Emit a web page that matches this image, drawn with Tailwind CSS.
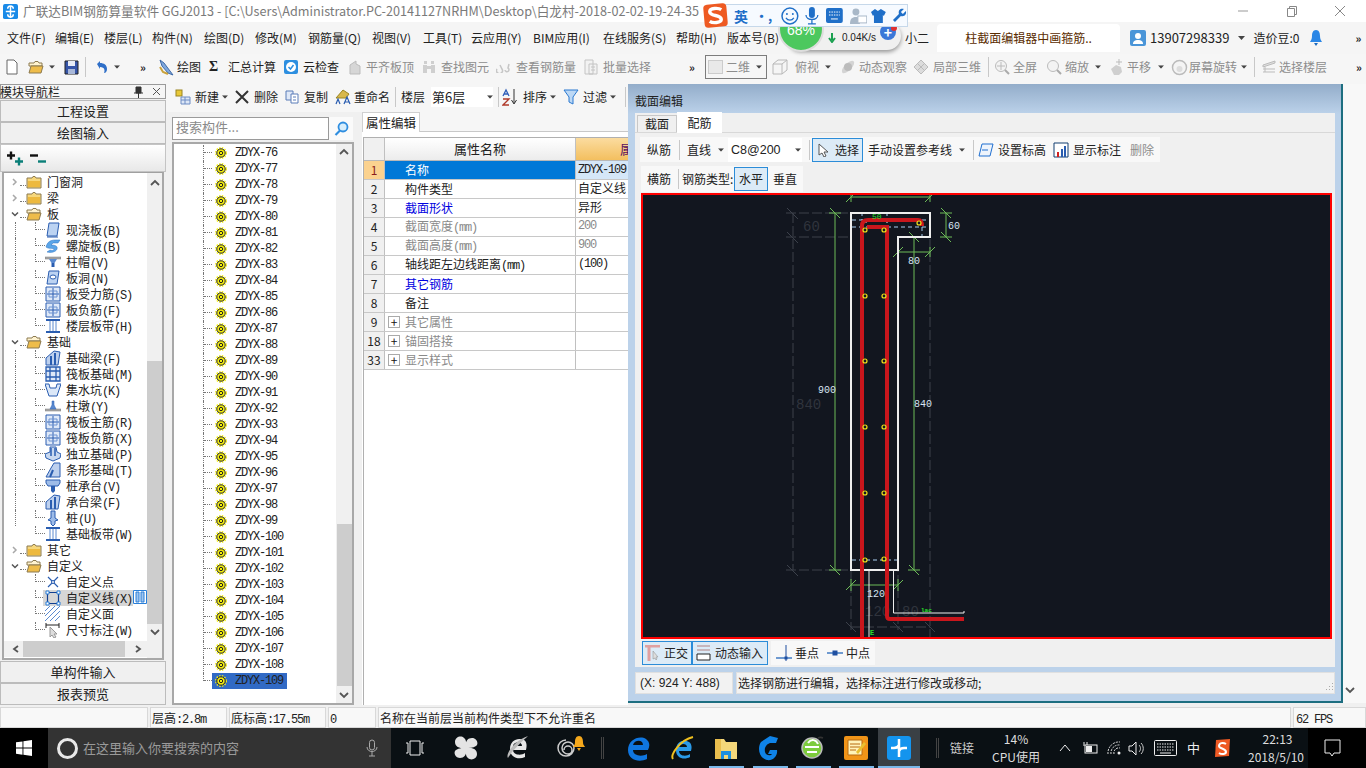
<!DOCTYPE html>
<html lang="zh">
<head>
<meta charset="utf-8">
<script src="https://cdn.jsdelivr.net/npm/@tailwindcss/browser@4"></script>
<title>广联达BIM钢筋算量软件</title>
</head>
<body class="m-0 bg-[#f0f0f0]">
<svg class="hidden">
  <symbol id="folder" viewBox="0 0 16 14"><path d="M1 3h5l1-1.500h2l1 1.500h5v10H1z" fill="#f6d77c" stroke="#8c7a50"/><path d="M2 6h12v6H2z" fill="#edb93e"/></symbol>
  <symbol id="folderopen" viewBox="0 0 16 14"><path d="M1 3h5l1-1.500h3l1 1.500h3v3H1z" fill="#fff3cf" stroke="#8c7a50"/><path d="M1 13l2-7h12l-2 7z" fill="#eebc4a" stroke="#8c7a50"/></symbol>
  <symbol id="coin" viewBox="0 0 12 12"><circle cx="6" cy="6" r="5.300" fill="none" stroke="#f4ee10" stroke-width="1.400" stroke-dasharray="1.500 1.300"/><circle cx="6" cy="6" r="4.200" fill="#f4ee10" stroke="#222" stroke-width="1"/><circle cx="6" cy="6" r="1.700" fill="#f4ee10" stroke="#222"/></symbol>
  <symbol id="chev" viewBox="0 0 8 8"><path d="M2 1l3 3-3 3" fill="none" stroke="#a8a8a8" stroke-width="1.500"/></symbol>
  <symbol id="chevd" viewBox="0 0 8 8"><path d="M1 2.500l3 3 3-3" fill="none" stroke="#555" stroke-width="1.500"/></symbol>
  <symbol id="sup" viewBox="0 0 10 8"><path d="M1 6l4-4 4 4" fill="none" stroke="#555" stroke-width="1.800"/></symbol>
  <symbol id="sdn" viewBox="0 0 10 8"><path d="M1 2l4 4 4-4" fill="none" stroke="#555" stroke-width="1.800"/></symbol>
  <symbol id="grid" viewBox="0 0 16 16"><path d="M1 1h14v14H1z" fill="#dfe9f8" stroke="#2a5db0"/><path d="M8 2v12M2 8h12" stroke="#2a5db0"/><path d="M4 5h8v6H4z" fill="none" stroke="#6c93d2"/></symbol>
  <symbol id="band" viewBox="0 0 16 16"><path d="M1 2h14M1 14h14" stroke="#2a5db0" stroke-width="2"/><path d="M5 3v10M8 3v10M11 3v10" stroke="#5b8ad0"/></symbol>
  <symbol id="beam" viewBox="0 0 16 16"><path d="M1 15V8L9 1l6 1-2 13z" fill="#bdd0ee" stroke="#2a5db0"/><path d="M6 15V6M10 15V3" stroke="#2a5db0" stroke-width="2"/></symbol>
  <symbol id="dd" viewBox="0 0 7 4"><path d="M0 0h7L3.500 4z" fill="#444"/></symbol>
</svg>

<div class="relative flex h-[768px] w-[1366px] flex-col overflow-hidden font-['Noto_Sans_CJK_SC','Liberation_Sans',sans-serif] text-[12px] leading-4 text-[#222] [&_b]:font-['Liberation_Mono',monospace] [&_b]:font-normal [&_b]:tracking-[-1.200px]">

  <!-- title bar -->
  <header class="flex h-[22px] items-center bg-white pl-[3px]">
    <svg class="h-[15px] w-[15px]" viewBox="0 0 16 16"><rect width="16" height="16" rx="2" fill="#1a8be8"/><path d="M8 2v12M3 8h10M5 5a3 3 0 0 1 6 0M5 11a3 3 0 0 0 6 0" fill="none" stroke="#fff" stroke-width="1.600"/></svg>
    <span class="ml-[5px] whitespace-nowrap text-[12.650px] text-[#7a7a7a]">广联达BIM钢筋算量软件 GGJ2013 - [C:\Users\Administrator.PC-20141127NRHM\Desktop\白龙村-2018-02-02-19-24-35</span>
    <div class="ml-auto flex items-center">
      <svg class="mr-[37px] h-3 w-3" viewBox="0 0 12 12"><path d="M1 6h10" stroke="#999"/></svg>
      <svg class="mr-[36px] h-3 w-3" viewBox="0 0 12 12"><path d="M1.500 3.500h7v8h-7zM3.500 3.500v-2h7v8h-2" fill="none" stroke="#888"/></svg>
      <svg class="mr-[20px] h-3 w-3" viewBox="0 0 12 12"><path d="M1 1l10 10M11 1L1 11" stroke="#888"/></svg>
    </div>
  </header>

  <!-- menu bar -->
  <nav class="flex h-[32px] items-center bg-[#f5f5f5] pl-[7px] whitespace-nowrap">
    <span class="w-[48px]">文件(F)</span><span class="w-[49px]">编辑(E)</span><span class="w-[48px]">楼层(L)</span><span class="w-[52px]">构件(N)</span><span class="w-[51px]">绘图(D)</span><span class="w-[53px]">修改(M)</span><span class="w-[64px]">钢筋量(Q)</span><span class="w-[51px]">视图(V)</span><span class="w-[48px]">工具(T)</span><span class="w-[62px]">云应用(Y)</span><span class="w-[70px]">BIM应用(I)</span><span class="w-[73px]">在线服务(S)</span><span class="w-[51px]">帮助(H)</span><span class="w-[178px]">版本号(B)</span><span class="w-[32px]">小二</span>
    <span class="flex h-[28px] w-[183px] items-center justify-center rounded-t-[4px] bg-white text-[#5a2c00]">柱截面编辑器中画箍筋..</span>
    <span class="ml-[10px] flex items-center"><svg class="h-[16px] w-[16px]" viewBox="0 0 16 16"><rect width="16" height="16" rx="2" fill="#4a95d8"/><circle cx="8" cy="6" r="3" fill="#fff"/><path d="M3 14c0-3 2-4 5-4s5 1 5 4z" fill="#fff"/></svg><span class="ml-[4px] text-[13px]">13907298339</span></span>
    <svg class="ml-[9px] h-1 w-[7px]" viewBox="0 0 7 4"><use href="#dd"/></svg>
    <span class="ml-[8px]">造价豆:0</span>
    <svg class="ml-[10px] h-[18px] w-[14px]" viewBox="0 0 14 18"><path d="M7 1c3 0 4 3 4 6s1 4 2 6H1c1-2 2-3 2-6s1-6 4-6z" fill="#2a86e6"/><path d="M5 14h4l-2 3z" fill="#1a6ac0"/></svg>
    <span class="ml-[32px] text-[11px] font-bold leading-3">»</span>
  </nav>

  <!-- main toolbar -->
  <div class="flex h-[30px] items-center whitespace-nowrap bg-[#f6f6f6] pb-[4px] pl-[6px] text-[#222] [&>svg]:shrink-0">
    <svg class="h-4 w-3" viewBox="0 0 12 16"><path d="M1 1h7l3 3v11H1z" fill="#fff" stroke="#666"/></svg>
    <svg class="ml-[10px] h-[14px] w-[16px]" viewBox="0 0 16 14"><use href="#folderopen"/></svg>
    <svg class="ml-[5px] h-1 w-[6px]" viewBox="0 0 7 4"><use href="#dd"/></svg>
    <svg class="ml-[9px] h-[15px] w-[15px]" viewBox="0 0 15 15"><path d="M1 1h13v13H1z" fill="#3655a8" stroke="#222"/><path d="M4 1h7v5H4z" fill="#e8ecf6"/><path d="M4 9h7v5H4z" fill="#a9b8d8"/></svg>
    <i class="ml-[6px] mr-[8px] h-5 border-l border-[#c8c8c8]"></i>
    <svg class="h-[14px] w-[14px]" viewBox="0 0 14 14"><path d="M3 4l3-3v2c4 0 7 2 7 6 0 2-1 4-3 4 1-2 1-6-4-6v2z" fill="#2f6fc8"/></svg>
    <svg class="ml-[6px] h-1 w-[6px]" viewBox="0 0 7 4"><use href="#dd"/></svg>
    <span class="ml-[20px] w-[10px] text-[11px] font-bold leading-3">»</span>
    <svg class="ml-[7px] h-[18px] w-[18px]" viewBox="0 0 18 18"><path d="M3 2l4 3 6 8 3 4-5-2-6-7z" fill="#7fa8dc" stroke="#3f6aa8"/><path d="M3 9l3 5 5 2" fill="none" stroke="#c9a23c" stroke-width="2"/></svg>
    <span class="ml-[2px] w-[31px]">绘图</span>
    <span class="w-[20px] pl-[1px] text-[14px] font-bold font-['Liberation_Serif',serif]">Σ</span>
    <span class="w-[48px]">汇总计算</span>
    <svg class="ml-[7px] h-4 w-4" viewBox="0 0 16 16"><rect x="1" y="1" width="14" height="14" rx="2" fill="#2d8fe0"/><circle cx="8" cy="8" r="5" fill="#fff"/><path d="M5.500 8l2 2 3-4" fill="none" stroke="#2d8fe0" stroke-width="1.500"/></svg>
    <span class="ml-[4px] w-[36px]">云检查</span>
    <svg class="ml-[8px] h-[16px] w-[16px]" viewBox="0 0 16 16"><path d="M3 15V6l6-4v3l4 2v8z" fill="#d6d6d6" stroke="#bbb"/></svg>
    <span class="ml-[3px] w-[48px] text-[#8d8d8d]">平齐板顶</span>
    <svg class="ml-[7px] h-[14px] w-[16px]" viewBox="0 0 16 14"><path d="M2 5h4v8H2zM10 5h4v8h-4zM3 1h3v3H3zM10 1h3v3h-3zM6 6h4v3H6z" fill="#cfcfcf"/></svg>
    <span class="ml-[4px] w-[48px] text-[#8d8d8d]">查找图元</span>
    <svg class="ml-[7px] h-3 w-[14px]" viewBox="0 0 14 12"><path d="M1 8a3 3 0 1 0 5 0l-2-4M9 9a2 2 0 1 0 3-2l1-4" fill="none" stroke="#c6c6c6" stroke-width="1.500"/></svg>
    <span class="ml-[6px] w-[60px] text-[#8d8d8d]">查看钢筋量</span>
    <svg class="ml-[7px] h-4 w-4" viewBox="0 0 16 16"><path d="M2 1h8v14H2zM6 5h8v10H6z" fill="#f2f2f2" stroke="#c4c4c4"/><path d="M8 8h4M8 11h4" stroke="#c4c4c4"/></svg>
    <span class="ml-[4px] w-[48px] text-[#8d8d8d]">批量选择</span>
    <span class="ml-[38px] w-[8px] text-[11px] font-bold leading-3">»</span>
    <div class="ml-[8px] flex h-[24px] w-[62px] shrink-0 items-center border border-[#7c7c7c] pl-[2px] text-[#8d8d8d]">
      <i class="h-[14px] w-[15px] border border-[#ccc] bg-[#e9e9e9]"></i><span class="ml-[3px]">二维</span><svg class="ml-[6px] h-1 w-[6px]" viewBox="0 0 7 4"><use href="#dd"/></svg>
    </div>
    <svg class="ml-[4px] h-[18px] w-[18px]" viewBox="0 0 18 18"><path d="M2 6l5-4h9v10l-5 4H2zM2 6h9v10M11 6l5-4" fill="#f5f5f5" stroke="#b8b8b8"/></svg>
    <span class="ml-[6px] w-[24px] text-[#8d8d8d]">俯视</span><svg class="ml-[6px] h-1 w-[6px]" viewBox="0 0 7 4"><use href="#dd"/></svg>
    <svg class="ml-[8px] h-[18px] w-[18px]" viewBox="0 0 18 18"><ellipse cx="9" cy="9" rx="8" ry="3.500" transform="rotate(-45 9 9)" fill="#d4d4d4"/><circle cx="9" cy="9" r="4" fill="#bcbcbc"/></svg>
    <span class="ml-[2px] w-[48px] text-[#8d8d8d]">动态观察</span>
    <svg class="ml-[6px] h-[16px] w-[16px]" viewBox="0 0 16 16"><path d="M8 1l7 7-7 7-7-7z" fill="#dcdcdc" stroke="#bbb"/><path d="M4 4l8 8M12 4l-8 8" stroke="#bbb"/></svg>
    <span class="ml-[4px] w-[48px] text-[#8d8d8d]">局部三维</span>
    <i class="ml-[7px] h-5 border-l border-[#c8c8c8]"></i>
    <svg class="ml-[5px] h-[16px] w-[16px]" viewBox="0 0 16 16"><circle cx="7" cy="7" r="5.500" fill="#f3f3f3" stroke="#bbb"/><path d="M3 7h8M7 3v8" stroke="#bbb"/><path d="M11 11l4 4" stroke="#aaa" stroke-width="2"/></svg>
    <span class="ml-[3px] w-[24px] text-[#8d8d8d]">全屏</span>
    <svg class="ml-[9px] h-[16px] w-[16px]" viewBox="0 0 16 16"><circle cx="7" cy="7" r="5.500" fill="#f3f3f3" stroke="#bbb"/><path d="M11 11l4 4" stroke="#aaa" stroke-width="2"/></svg>
    <span class="ml-[3px] w-[24px] text-[#8d8d8d]">缩放</span><svg class="ml-[6px] h-1 w-[6px]" viewBox="0 0 7 4"><use href="#dd"/></svg>
    <svg class="ml-[8px] h-[18px] w-[16px]" viewBox="0 0 16 18"><path d="M5 17l-3-6 5-4 5 2 1 5-3 3z" fill="#cfcfcf"/><path d="M10 1v6M7 4h6" stroke="#bbb"/></svg>
    <span class="ml-[2px] w-[24px] text-[#8d8d8d]">平移</span><svg class="ml-[7px] h-1 w-[6px]" viewBox="0 0 7 4"><use href="#dd"/></svg>
    <svg class="ml-[7px] h-[17px] w-[17px]" viewBox="0 0 17 17"><circle cx="8.500" cy="8.500" r="7" fill="#f4f4f4" stroke="#bbb" stroke-width="1.500"/><circle cx="8.500" cy="10" r="3" fill="#ddd"/></svg>
    <span class="ml-[1px] w-[48px] text-[#8d8d8d]">屏幕旋转</span><svg class="ml-[4px] h-1 w-[6px]" viewBox="0 0 7 4"><use href="#dd"/></svg>
    <i class="ml-[7px] h-5 border-l border-[#c8c8c8]"></i>
    <svg class="ml-[7px] h-[14px] w-[14px]" viewBox="0 0 14 14"><path d="M1 5l12-4v2L1 7zM1 9h12M1 12h12M3 7v5" fill="#e0e0e0" stroke="#bbb"/></svg>
    <span class="ml-[3px] w-[48px] text-[#8d8d8d]">选择楼层</span>
    <span class="ml-[29px] text-[11px] font-bold leading-3">»</span>
  </div>

  <!-- working area -->
  <main class="flex h-[623px] items-start">

    <!-- module navigation -->
    <aside class="flex h-[621px] w-[166px] flex-col bg-[#f0f0f0]">
      <div class="flex h-[15px] items-center border border-[#9a9a9a] bg-[#f5f5f5] pr-[4px] text-[12px]">
        <span class="-ml-[1px]">模块导航栏</span>
        <svg class="ml-auto h-3 w-[9px]" viewBox="0 0 9 12"><path d="M2 1h5v6H2zM0 7h9M4.500 7v5" fill="#333" stroke="#333"/></svg>
        <svg class="ml-[9px] h-[9px] w-[9px]" viewBox="0 0 9 9"><path d="M1 1l7 7M8 1L1 8" stroke="#555"/></svg>
      </div>
      <div class="mt-[1px] flex h-[22px] items-center justify-center border border-[#bcbcbc] text-[13px]">工程设置</div>
      <div class="flex h-[22px] items-center justify-center border border-[#bcbcbc] text-[13px]">绘图输入</div>
      <div class="flex h-[28px] items-center gap-[7px] border border-[#c4c4c4] bg-[linear-gradient(#fff,#e8e8e8)] pl-[6px]">
        <svg class="h-[15px] w-[16px]" viewBox="0 0 16 15"><path d="M0 4.500h8M4 .500v8" stroke="#111" stroke-width="2.400"/><path d="M8 10.500h8M12 6.500v8" stroke="#0a7f78" stroke-width="2.400"/></svg>
        <svg class="h-[15px] w-[16px]" viewBox="0 0 16 15"><path d="M0 4.500h8" stroke="#111" stroke-width="2.400"/><path d="M8 10.500h8" stroke="#0a7f78" stroke-width="2.400"/></svg>
      </div>
      <div class="relative mx-[2px] flex min-h-0 flex-1 border-2 border-t border-[#a8a8a8] border-t-[#a0a0a0] bg-white">
        <div class="flex w-[143px] flex-col pt-[1px] text-[#222] [&>div]:flex [&>div]:h-4 [&>div]:shrink-0 [&_i]:border-dotted [&_i]:border-[#777]">
          <div class="items-center pl-[7px]"><svg class="h-2 w-2" viewBox="0 0 8 8"><use href="#chev"/></svg><i class="ml-[1px] h-2 w-[6px] border-b"></i><svg class="h-[14px] w-[16px]" viewBox="0 0 16 14"><use href="#folder"/></svg><span class="ml-[5px]">门窗洞</span></div>
          <div class="items-center pl-[7px]"><svg class="h-2 w-2" viewBox="0 0 8 8"><use href="#chev"/></svg><i class="ml-[1px] h-2 w-[6px] border-b"></i><svg class="h-[14px] w-[16px]" viewBox="0 0 16 14"><use href="#folder"/></svg><span class="ml-[5px]">梁</span></div>
          <div class="items-center pl-[7px]"><svg class="h-2 w-2" viewBox="0 0 8 8"><use href="#chevd"/></svg><i class="ml-[1px] h-2 w-[6px] border-b"></i><svg class="h-[14px] w-[16px]" viewBox="0 0 16 14"><use href="#folderopen"/></svg><span class="ml-[5px]">板</span></div>
          <div class="pl-[11px]"><i class="w-5 border-l"></i><i class="h-2 w-[10px] border-b border-l"></i><svg class="h-4 w-[16px]" viewBox="0 0 16 16"><path d="M4 1h10l-2 13H2z" fill="#bcd3f2" stroke="#2a5db0"/><path d="M2 15h11" stroke="#2a5db0"/></svg><span class="ml-[5px]">现浇板<b>(B)</b></span></div>
          <div class="pl-[11px]"><i class="w-5 border-l"></i><i class="h-2 w-[10px] border-b border-l"></i><svg class="h-4 w-[16px]" viewBox="0 0 16 16"><path d="M1 9c2-8 8-7 14-7l-2 3H8L6 7c4 0 7 1 6 4-1 3-6 4-10 3l3-2c3 1 4 0 4-1S3 11 1 9z" fill="#5aa5e8" stroke="#2a6fc0" stroke-width=".5"/></svg><span class="ml-[5px]">螺旋板<b>(B)</b></span></div>
          <div class="pl-[11px]"><i class="w-5 border-l"></i><i class="h-2 w-[10px] border-b border-l"></i><svg class="h-4 w-[16px]" viewBox="0 0 16 16"><path d="M0 3h16v2H0z" fill="#aaa" stroke="#777" stroke-width=".5"/><path d="M4 5h8L9.500 9h-3z" fill="#5a8ad0"/><path d="M6.500 9h3v4h-3z" fill="#2a5db0"/></svg><span class="ml-[5px]">柱帽<b>(V)</b></span></div>
          <div class="pl-[11px]"><i class="w-5 border-l"></i><i class="h-2 w-[10px] border-b border-l"></i><svg class="h-4 w-[16px]" viewBox="0 0 16 16"><path d="M4 1h10l-2 13H2z" fill="#bcd3f2" stroke="#2a5db0"/><ellipse cx="8" cy="7" rx="3" ry="2" fill="#fff" stroke="#2a5db0"/></svg><span class="ml-[5px]">板洞<b>(N)</b></span></div>
          <div class="pl-[11px]"><i class="w-5 border-l"></i><i class="h-2 w-[10px] border-b border-l"></i><svg class="h-4 w-[16px]" viewBox="0 0 16 16"><use href="#grid"/></svg><span class="ml-[5px]">板受力筋<b>(S)</b></span></div>
          <div class="pl-[11px]"><i class="w-5 border-l"></i><i class="h-2 w-[10px] border-b border-l"></i><svg class="h-4 w-[16px]" viewBox="0 0 16 16"><use href="#grid"/></svg><span class="ml-[5px]">板负筋<b>(F)</b></span></div>
          <div class="pl-[11px]"><i class="w-5"></i><i class="h-2 w-[10px] border-b border-l"></i><svg class="h-4 w-[16px]" viewBox="0 0 16 16"><use href="#band"/></svg><span class="ml-[5px]">楼层板带<b>(H)</b></span></div>
          <div class="items-center pl-[7px]"><svg class="h-2 w-2" viewBox="0 0 8 8"><use href="#chevd"/></svg><i class="ml-[1px] h-2 w-[6px] border-b"></i><svg class="h-[14px] w-[16px]" viewBox="0 0 16 14"><use href="#folderopen"/></svg><span class="ml-[5px]">基础</span></div>
          <div class="pl-[11px]"><i class="w-5 border-l"></i><i class="h-2 w-[10px] border-b border-l"></i><svg class="h-4 w-[16px]" viewBox="0 0 16 16"><use href="#beam"/></svg><span class="ml-[5px]">基础梁<b>(F)</b></span></div>
          <div class="pl-[11px]"><i class="w-5 border-l"></i><i class="h-2 w-[10px] border-b border-l"></i><svg class="h-4 w-[16px]" viewBox="0 0 16 16"><path d="M1 1h14v14H1zM1 5h14M1 11h14M5 1v14M11 1v14" fill="#dfe9f8" stroke="#2a5db0" stroke-width="1.300"/></svg><span class="ml-[5px]">筏板基础<b>(M)</b></span></div>
          <div class="pl-[11px]"><i class="w-5 border-l"></i><i class="h-2 w-[10px] border-b border-l"></i><svg class="h-4 w-[16px]" viewBox="0 0 16 16"><path d="M0 2h4l1 4h6l1-4h4l-3 9-1 3H4l-1-3z" fill="#dce8f8" stroke="#2a5db0"/></svg><span class="ml-[5px]">集水坑<b>(K)</b></span></div>
          <div class="pl-[11px]"><i class="w-5 border-l"></i><i class="h-2 w-[10px] border-b border-l"></i><svg class="h-4 w-[16px]" viewBox="0 0 16 16"><path d="M0 11h16v2H0z" fill="#aaa" stroke="#777" stroke-width=".5"/><path d="M5 11l2-4V3h2v4l2 4z" fill="#5a8ad0" stroke="#2a5db0" stroke-width=".5"/></svg><span class="ml-[5px]">柱墩<b>(Y)</b></span></div>
          <div class="pl-[11px]"><i class="w-5 border-l"></i><i class="h-2 w-[10px] border-b border-l"></i><svg class="h-4 w-[16px]" viewBox="0 0 16 16"><use href="#grid"/></svg><span class="ml-[5px]">筏板主筋<b>(R)</b></span></div>
          <div class="pl-[11px]"><i class="w-5 border-l"></i><i class="h-2 w-[10px] border-b border-l"></i><svg class="h-4 w-[16px]" viewBox="0 0 16 16"><use href="#grid"/></svg><span class="ml-[5px]">筏板负筋<b>(X)</b></span></div>
          <div class="pl-[11px]"><i class="w-5 border-l"></i><i class="h-2 w-[10px] border-b border-l"></i><svg class="h-4 w-[16px]" viewBox="0 0 16 16"><path d="M0 8l5-2v-5h6l1 5 4 2-1 4-7 3-7-3z" fill="#c9d9f0" stroke="#2a5db0"/><path d="M6 2v8M10 2v8" stroke="#2a5db0" stroke-width="1.500"/></svg><span class="ml-[5px]">独立基础<b>(P)</b></span></div>
          <div class="pl-[11px]"><i class="w-5 border-l"></i><i class="h-2 w-[10px] border-b border-l"></i><svg class="h-4 w-[16px]" viewBox="0 0 16 16"><path d="M1 15l5-9 3-5h6v14z" fill="#bdd0ee" stroke="#2a5db0"/><path d="M5 15l3-7" stroke="#2a5db0" stroke-width="2"/></svg><span class="ml-[5px]">条形基础<b>(T)</b></span></div>
          <div class="pl-[11px]"><i class="w-5 border-l"></i><i class="h-2 w-[10px] border-b border-l"></i><svg class="h-4 w-[16px]" viewBox="0 0 16 16"><path d="M1 2h14v3l-2 3H3L1 5z" fill="#9ebce8" stroke="#2a5db0"/><path d="M6 8h4v5l-2 2-2-2z" fill="#2a5db0"/></svg><span class="ml-[5px]">桩承台<b>(V)</b></span></div>
          <div class="pl-[11px]"><i class="w-5 border-l"></i><i class="h-2 w-[10px] border-b border-l"></i><svg class="h-4 w-[16px]" viewBox="0 0 16 16"><use href="#beam"/></svg><span class="ml-[5px]">承台梁<b>(F)</b></span></div>
          <div class="pl-[11px]"><i class="w-5 border-l"></i><i class="h-2 w-[10px] border-b border-l"></i><svg class="h-4 w-[16px]" viewBox="0 0 16 16"><path d="M6 1h4v7l3 2-3 1v3l-2 2-2-2v-3l-3-1 3-2z" fill="#9ebce8" stroke="#2a5db0"/></svg><span class="ml-[5px]">桩<b>(U)</b></span></div>
          <div class="pl-[11px]"><i class="w-5"></i><i class="h-2 w-[10px] border-b border-l"></i><svg class="h-4 w-[16px]" viewBox="0 0 16 16"><use href="#band"/></svg><span class="ml-[5px]">基础板带<b>(W)</b></span></div>
          <div class="items-center pl-[7px]"><svg class="h-2 w-2" viewBox="0 0 8 8"><use href="#chev"/></svg><i class="ml-[1px] h-2 w-[6px] border-b"></i><svg class="h-[14px] w-[16px]" viewBox="0 0 16 14"><use href="#folder"/></svg><span class="ml-[5px]">其它</span></div>
          <div class="items-center pl-[7px]"><svg class="h-2 w-2" viewBox="0 0 8 8"><use href="#chevd"/></svg><i class="ml-[1px] h-2 w-[6px] border-b"></i><svg class="h-[14px] w-[16px]" viewBox="0 0 16 14"><use href="#folderopen"/></svg><span class="ml-[5px]">自定义</span></div>
          <div class="pl-[11px]"><i class="w-5"></i><i class="h-2 w-[10px] border-b border-l"></i><svg class="h-4 w-[16px]" viewBox="0 0 16 16"><path d="M3 3l10 10M13 3L3 13" stroke="#2a5db0" stroke-width="1.200"/><circle cx="8" cy="8" r="1.500" fill="#fff" stroke="#2a5db0"/></svg><span class="ml-[5px]">自定义点</span></div>
          <div class="pl-[11px]"><i class="w-5"></i><i class="h-2 w-[8px] border-b border-l"></i><p class="flex h-4 w-[90px] shrink-0 whitespace-nowrap bg-[#d6d6d6] pl-[2px]"><svg class="h-4 w-[16px]" viewBox="0 0 16 16"><path d="M2.500 2.500h11v11h-11z" fill="none" stroke="#123f90" stroke-width="1.200"/><path d="M1 1h3v3H1zM12 1h3v3h-3zM1 12h3v3H1zM12 12h3v3h-3z" fill="#fff" stroke="#2a7fd8"/></svg><span class="ml-[5px]">自定义线<b>(X)</b></span></p><svg class="h-[14px] w-[14px] shrink-0" viewBox="0 0 14 14"><path d="M.5.500h13v13H.5z" fill="#fff" stroke="#2a7fd8"/><path d="M3 2h3v10H3zM8 2h3v10H8z" fill="#9fc5ef" stroke="#2a7fd8"/></svg></div>
          <div class="pl-[11px]"><i class="w-5"></i><i class="h-2 w-[10px] border-b border-l"></i><svg class="h-4 w-[16px]" viewBox="0 0 16 16"><path d="M0 5L5 0M0 10L10 0M0 15L15 0M5 15L15 5M10 15l5-5" stroke="#5b8ad0"/></svg><span class="ml-[5px]">自定义面</span></div>
          <div class="pl-[11px]"><i class="w-5"></i><i class="h-2 w-[10px] border-b border-l"></i><svg class="h-4 w-[16px]" viewBox="0 0 16 16"><path d="M1 1v5M14 1v5M1 3h13" stroke="#222"/><path d="M5 5v10l2-2 2 3 2-1-2-3h3z" fill="#ddd" stroke="#999"/></svg><span class="ml-[5px]">尺寸标注<b>(W)</b></span></div>
          <div class="mb-[1px] mt-auto flex h-[15px] items-center bg-[#f0f0f0]"><svg class="ml-[8px] h-[10px] w-2" viewBox="0 0 8 8"><path d="M6 1L2 4l4 3" fill="none" stroke="#555" stroke-width="1.800"/></svg><i class="ml-[3px] h-full w-[102px] bg-[#cdcdcd]"></i><svg class="ml-[9px] h-[10px] w-2" viewBox="0 0 8 8"><path d="M2 1l4 3-4 3" fill="none" stroke="#555" stroke-width="1.800"/></svg></div>
        </div>
        <div class="flex w-[16px] flex-col items-center bg-[#f0f0f0] pb-[20px] pt-[6px]">
          <svg class="h-2 w-[10px]" viewBox="0 0 10 8"><use href="#sup"/></svg>
          <i class="mt-[174px] h-[263px] w-[15px] bg-[#cdcdcd]"></i>
          <svg class="mt-[4px] h-2 w-[10px]" viewBox="0 0 10 8"><use href="#sdn"/></svg>
        </div>
      </div>
      <div class="mt-[1px] flex h-[22px] items-center justify-center border border-[#bcbcbc] text-[13px]">单构件输入</div>
      <div class="flex h-[22px] items-center justify-center border border-[#bcbcbc] text-[13px]">报表预览</div>
    </aside>

    <!-- centre: list + properties -->
    <section class="flex h-[621px] w-[462px] flex-col">
      <div class="flex h-[28px] items-center whitespace-nowrap bg-[#f6f6f6] pb-[2px] pl-[9px]">
        <svg class="h-4 w-[16px]" viewBox="0 0 16 16"><rect x="1" y="1" width="6" height="6" fill="#e8c838" stroke="#9a8420"/><path d="M6 8h9v7H6z" fill="#dce6f6" stroke="#6c8cc4"/><path d="M6 11h9M10 8v7" stroke="#6c8cc4"/></svg>
        <span class="ml-[4px]">新建</span><svg class="ml-[3px] h-1 w-[6px]" viewBox="0 0 7 4"><use href="#dd"/></svg>
        <svg class="ml-[7px] h-[14px] w-[14px]" viewBox="0 0 14 14"><path d="M1 1l12 12M13 1L1 13" stroke="#333" stroke-width="2"/></svg>
        <span class="ml-[5px]">删除</span>
        <svg class="ml-[7px] h-[14px] w-[14px]" viewBox="0 0 14 14"><path d="M1 1h7v9H1z" fill="#dfe8f7" stroke="#5a7cb8"/><path d="M6 4h7v9H6z" fill="#fff" stroke="#5a7cb8"/><path d="M8 7h3M8 10h3" stroke="#5a7cb8"/></svg>
        <span class="ml-[5px]">复制</span>
        <svg class="ml-[7px] h-4 w-[16px]" viewBox="0 0 16 16"><path d="M1 9l7-8 6 4-3 4z" fill="#d8b84c" stroke="#9a8420"/><path d="M1 15l2-5 2 5M9 15l3-7 3 7M10 13h4" fill="none" stroke="#2a5db0" stroke-width="1.200"/></svg>
        <span class="ml-[3px]">重命名</span>
        <i class="mx-[5px] h-5 border-l border-[#c8c8c8]"></i>
        <span>楼层</span>
        <div class="ml-[6px] flex h-[20px] w-[62px] items-center bg-white pl-[1px]"><span class="text-[13px]">第6层</span><svg class="ml-auto h-1 w-[6px]" viewBox="0 0 7 4"><use href="#dd"/></svg></div>
        <i class="ml-[5px] mr-[3px] h-5 border-l border-[#c8c8c8]"></i>
        <svg class="h-[18px] w-[17px]" viewBox="0 0 17 18"><path d="M1 8l3-6 3 6M2 6h4" fill="none" stroke="#2f5db8" stroke-width="1.300"/><path d="M1 11h6l-6 6h6" fill="none" stroke="#b03a2a" stroke-width="1.300"/><path d="M12 1v14M9.500 12l2.500 4 2.500-4" fill="none" stroke="#333"/></svg>
        <span class="ml-[4px]">排序</span><svg class="ml-[3px] h-1 w-[6px]" viewBox="0 0 7 4"><use href="#dd"/></svg>
        <svg class="ml-[7px] h-4 w-[16px]" viewBox="0 0 16 16"><path d="M1 1h14l-5 7v7l-4-2V8z" fill="#bcd8f5" stroke="#2a78d0"/></svg>
        <span class="ml-[4px]">过滤</span><svg class="ml-[3px] h-1 w-[6px]" viewBox="0 0 7 4"><use href="#dd"/></svg>
        <i class="ml-[9px] h-5 border-l border-[#c8c8c8]"></i>
      </div>
      <div class="flex min-h-0 flex-1">
        <!-- list -->
        <div class="ml-[6px] flex w-[182px] flex-col">
          <div class="flex h-[30px] bg-[#f0f0f0] pt-[5px]">
            <div class="flex h-[23px] w-[157px] items-center border border-[#9a9a9a] bg-white pb-[3px] pl-[3px] text-[13px] text-[#8a8a8a]">搜索构件...</div>
            <div class="flex h-[23px] w-[24px] items-center justify-center bg-[#fafafa]"><svg class="h-[15px] w-[15px]" viewBox="0 0 15 15"><circle cx="9" cy="6" r="4.500" fill="#d7eefc" stroke="#2f8ee0" stroke-width="1.800"/><path d="M6 9.500l-4.500 4.500" stroke="#2f8ee0" stroke-width="2.200"/></svg></div>
          </div>
          <div class="flex min-h-0 flex-1 border-2 border-[#a8a8a8] bg-white">
            <div class="flex w-[162px] flex-col pt-[1px] font-['Liberation_Mono',monospace] text-[12px] tracking-[-1.200px] [&>div]:flex [&>div]:h-4 [&>div]:shrink-0 [&>div]:pl-[29px] [&_i]:border-dotted [&_i]:border-[#777] [&_svg]:ml-[3px] [&_svg]:mt-[2px] [&_svg]:h-3 [&_svg]:w-3 [&_div_span]:ml-[8px]">
              <div><i class="w-[1px] border-l"></i><i class="h-2 w-[8px] border-b"></i><svg viewBox="0 0 12 12"><use href="#coin"/></svg><span>ZDYX-76</span></div>
              <div><i class="w-[1px] border-l"></i><i class="h-2 w-[8px] border-b"></i><svg viewBox="0 0 12 12"><use href="#coin"/></svg><span>ZDYX-77</span></div>
              <div><i class="w-[1px] border-l"></i><i class="h-2 w-[8px] border-b"></i><svg viewBox="0 0 12 12"><use href="#coin"/></svg><span>ZDYX-78</span></div>
              <div><i class="w-[1px] border-l"></i><i class="h-2 w-[8px] border-b"></i><svg viewBox="0 0 12 12"><use href="#coin"/></svg><span>ZDYX-79</span></div>
              <div><i class="w-[1px] border-l"></i><i class="h-2 w-[8px] border-b"></i><svg viewBox="0 0 12 12"><use href="#coin"/></svg><span>ZDYX-80</span></div>
              <div><i class="w-[1px] border-l"></i><i class="h-2 w-[8px] border-b"></i><svg viewBox="0 0 12 12"><use href="#coin"/></svg><span>ZDYX-81</span></div>
              <div><i class="w-[1px] border-l"></i><i class="h-2 w-[8px] border-b"></i><svg viewBox="0 0 12 12"><use href="#coin"/></svg><span>ZDYX-82</span></div>
              <div><i class="w-[1px] border-l"></i><i class="h-2 w-[8px] border-b"></i><svg viewBox="0 0 12 12"><use href="#coin"/></svg><span>ZDYX-83</span></div>
              <div><i class="w-[1px] border-l"></i><i class="h-2 w-[8px] border-b"></i><svg viewBox="0 0 12 12"><use href="#coin"/></svg><span>ZDYX-84</span></div>
              <div><i class="w-[1px] border-l"></i><i class="h-2 w-[8px] border-b"></i><svg viewBox="0 0 12 12"><use href="#coin"/></svg><span>ZDYX-85</span></div>
              <div><i class="w-[1px] border-l"></i><i class="h-2 w-[8px] border-b"></i><svg viewBox="0 0 12 12"><use href="#coin"/></svg><span>ZDYX-86</span></div>
              <div><i class="w-[1px] border-l"></i><i class="h-2 w-[8px] border-b"></i><svg viewBox="0 0 12 12"><use href="#coin"/></svg><span>ZDYX-87</span></div>
              <div><i class="w-[1px] border-l"></i><i class="h-2 w-[8px] border-b"></i><svg viewBox="0 0 12 12"><use href="#coin"/></svg><span>ZDYX-88</span></div>
              <div><i class="w-[1px] border-l"></i><i class="h-2 w-[8px] border-b"></i><svg viewBox="0 0 12 12"><use href="#coin"/></svg><span>ZDYX-89</span></div>
              <div><i class="w-[1px] border-l"></i><i class="h-2 w-[8px] border-b"></i><svg viewBox="0 0 12 12"><use href="#coin"/></svg><span>ZDYX-90</span></div>
              <div><i class="w-[1px] border-l"></i><i class="h-2 w-[8px] border-b"></i><svg viewBox="0 0 12 12"><use href="#coin"/></svg><span>ZDYX-91</span></div>
              <div><i class="w-[1px] border-l"></i><i class="h-2 w-[8px] border-b"></i><svg viewBox="0 0 12 12"><use href="#coin"/></svg><span>ZDYX-92</span></div>
              <div><i class="w-[1px] border-l"></i><i class="h-2 w-[8px] border-b"></i><svg viewBox="0 0 12 12"><use href="#coin"/></svg><span>ZDYX-93</span></div>
              <div><i class="w-[1px] border-l"></i><i class="h-2 w-[8px] border-b"></i><svg viewBox="0 0 12 12"><use href="#coin"/></svg><span>ZDYX-94</span></div>
              <div><i class="w-[1px] border-l"></i><i class="h-2 w-[8px] border-b"></i><svg viewBox="0 0 12 12"><use href="#coin"/></svg><span>ZDYX-95</span></div>
              <div><i class="w-[1px] border-l"></i><i class="h-2 w-[8px] border-b"></i><svg viewBox="0 0 12 12"><use href="#coin"/></svg><span>ZDYX-96</span></div>
              <div><i class="w-[1px] border-l"></i><i class="h-2 w-[8px] border-b"></i><svg viewBox="0 0 12 12"><use href="#coin"/></svg><span>ZDYX-97</span></div>
              <div><i class="w-[1px] border-l"></i><i class="h-2 w-[8px] border-b"></i><svg viewBox="0 0 12 12"><use href="#coin"/></svg><span>ZDYX-98</span></div>
              <div><i class="w-[1px] border-l"></i><i class="h-2 w-[8px] border-b"></i><svg viewBox="0 0 12 12"><use href="#coin"/></svg><span>ZDYX-99</span></div>
              <div><i class="w-[1px] border-l"></i><i class="h-2 w-[8px] border-b"></i><svg viewBox="0 0 12 12"><use href="#coin"/></svg><span>ZDYX-100</span></div>
              <div><i class="w-[1px] border-l"></i><i class="h-2 w-[8px] border-b"></i><svg viewBox="0 0 12 12"><use href="#coin"/></svg><span>ZDYX-101</span></div>
              <div><i class="w-[1px] border-l"></i><i class="h-2 w-[8px] border-b"></i><svg viewBox="0 0 12 12"><use href="#coin"/></svg><span>ZDYX-102</span></div>
              <div><i class="w-[1px] border-l"></i><i class="h-2 w-[8px] border-b"></i><svg viewBox="0 0 12 12"><use href="#coin"/></svg><span>ZDYX-103</span></div>
              <div><i class="w-[1px] border-l"></i><i class="h-2 w-[8px] border-b"></i><svg viewBox="0 0 12 12"><use href="#coin"/></svg><span>ZDYX-104</span></div>
              <div><i class="w-[1px] border-l"></i><i class="h-2 w-[8px] border-b"></i><svg viewBox="0 0 12 12"><use href="#coin"/></svg><span>ZDYX-105</span></div>
              <div><i class="w-[1px] border-l"></i><i class="h-2 w-[8px] border-b"></i><svg viewBox="0 0 12 12"><use href="#coin"/></svg><span>ZDYX-106</span></div>
              <div><i class="w-[1px] border-l"></i><i class="h-2 w-[8px] border-b"></i><svg viewBox="0 0 12 12"><use href="#coin"/></svg><span>ZDYX-107</span></div>
              <div><i class="w-[1px] border-l"></i><i class="h-2 w-[8px] border-b"></i><svg viewBox="0 0 12 12"><use href="#coin"/></svg><span>ZDYX-108</span></div>
              <div><i class="h-2 w-[1px] border-l"></i><i class="h-2 w-[8px] border-b"></i><p class="flex h-4 w-[75px] bg-[#316ac5]"><svg viewBox="0 0 12 12"><use href="#coin"/></svg><span class="ml-[8px]">ZDYX-109</span></p></div>
            </div>
            <div class="flex w-[16px] flex-col items-center bg-[#f0f0f0] pt-[4px]">
              <svg class="h-2 w-[10px]" viewBox="0 0 10 8"><use href="#sup"/></svg>
              <i class="mt-[368px] h-[162px] w-[15px] bg-[#cdcdcd]"></i>
              <svg class="mt-[5px] h-2 w-[10px]" viewBox="0 0 10 8"><use href="#sdn"/></svg>
            </div>
          </div>
        </div>
        <!-- properties -->
        <div class="ml-[8px] flex min-w-0 flex-1 flex-col bg-white">
          <div class="flex h-[20px] items-end border-b border-[#c8c8c8] bg-[#f6f6f6]">
            <div class="-mb-[1px] flex h-[20px] items-center border border-b-0 border-[#d0d0d0] bg-white px-[3px] text-[12.500px]">属性编辑</div>
          </div>
          <div class="ml-[1px] mt-[5px] flex flex-1 flex-col border-l border-t border-[#b0b0b0] [&_b]:text-[12px]">
            <div class="flex h-[23px] border-b border-[#b8b8b8]">
              <div class="w-[21px] border-r border-[#c0c0c0] bg-[#f0f0f0]"></div>
              <div class="flex w-[191px] items-center justify-center border-r border-[#c0c0c0] bg-[linear-gradient(#fff,#ececec)] text-[13px]">属性名称</div>
              <div class="flex flex-1 items-center overflow-hidden bg-[linear-gradient(#fbdca0,#f3bf5f)] pl-[44px] text-[13px] text-[#5a1060]">属</div>
            </div>
            <div class="flex h-[19px] border-b border-[#c8c8c8]">
              <div class="flex w-[21px] items-center justify-center border-r border-[#c0c0c0] bg-[#fbd28f] text-[#8a1c1c]">1</div>
              <div class="flex w-[191px] items-center border-r border-[#c0c0c0] bg-[#0078d7] pl-[20px] text-white">名称</div>
              <div class="flex flex-1 items-center overflow-hidden whitespace-nowrap bg-[#d5e7f8] pl-[2px] font-['Liberation_Mono',monospace] tracking-[-1.200px]">ZDYX-109</div>
            </div>
            <div class="flex h-[19px] border-b border-[#c8c8c8]">
              <div class="flex w-[21px] items-center justify-center border-r border-[#c0c0c0] bg-[#f0f0f0]">2</div>
              <div class="flex w-[191px] items-center border-r border-[#c0c0c0] pl-[20px]">构件类型</div>
              <div class="flex-1 overflow-hidden whitespace-nowrap pl-[2px]">自定义线</div>
            </div>
            <div class="flex h-[19px] border-b border-[#c8c8c8]">
              <div class="flex w-[21px] items-center justify-center border-r border-[#c0c0c0] bg-[#f0f0f0]">3</div>
              <div class="flex w-[191px] items-center border-r border-[#c0c0c0] pl-[20px] text-[#0000e0]">截面形状</div>
              <div class="flex-1 overflow-hidden whitespace-nowrap pl-[2px]">异形</div>
            </div>
            <div class="flex h-[19px] border-b border-[#c8c8c8] text-[#8a8a8a]">
              <div class="flex w-[21px] items-center justify-center border-r border-[#c0c0c0] bg-[#f0f0f0] text-[#222]">4</div>
              <div class="flex w-[191px] items-center border-r border-[#c0c0c0] pl-[20px]"><span>截面宽度<b>(mm)</b></span></div>
              <div class="flex-1 overflow-hidden pl-[2px] font-['Liberation_Mono',monospace] tracking-[-1.200px]">200</div>
            </div>
            <div class="flex h-[19px] border-b border-[#c8c8c8] text-[#8a8a8a]">
              <div class="flex w-[21px] items-center justify-center border-r border-[#c0c0c0] bg-[#f0f0f0] text-[#222]">5</div>
              <div class="flex w-[191px] items-center border-r border-[#c0c0c0] pl-[20px]"><span>截面高度<b>(mm)</b></span></div>
              <div class="flex-1 overflow-hidden pl-[2px] font-['Liberation_Mono',monospace] tracking-[-1.200px]">900</div>
            </div>
            <div class="flex h-[19px] border-b border-[#c8c8c8]">
              <div class="flex w-[21px] items-center justify-center border-r border-[#c0c0c0] bg-[#f0f0f0]">6</div>
              <div class="flex w-[191px] items-center border-r border-[#c0c0c0] pl-[20px]"><span>轴线距左边线距离<b>(mm)</b></span></div>
              <div class="flex-1 overflow-hidden pl-[2px] font-['Liberation_Mono',monospace] tracking-[-1.200px]">(100)</div>
            </div>
            <div class="flex h-[19px] border-b border-[#c8c8c8]">
              <div class="flex w-[21px] items-center justify-center border-r border-[#c0c0c0] bg-[#f0f0f0]">7</div>
              <div class="flex w-[191px] items-center border-r border-[#c0c0c0] pl-[20px] text-[#0000e0]">其它钢筋</div>
              <div class="flex-1"></div>
            </div>
            <div class="flex h-[19px] border-b border-[#c8c8c8]">
              <div class="flex w-[21px] items-center justify-center border-r border-[#c0c0c0] bg-[#f0f0f0]">8</div>
              <div class="flex w-[191px] items-center border-r border-[#c0c0c0] pl-[20px]">备注</div>
              <div class="flex-1"></div>
            </div>
            <div class="flex h-[19px] border-b border-[#c8c8c8]">
              <div class="flex w-[21px] items-center justify-center border-r border-[#c0c0c0] bg-[#f0f0f0]">9</div>
              <div class="flex w-[191px] items-center border-r border-[#c0c0c0] pl-[3px] text-[#8a8a8a]"><i class="flex h-[12px] w-[12px] items-center justify-center border border-[#aaa] text-[12px] not-italic leading-none text-[#111]">+</i><span class="ml-[5px]">其它属性</span></div>
              <div class="flex-1"></div>
            </div>
            <div class="flex h-[19px] border-b border-[#c8c8c8]">
              <div class="flex w-[21px] items-center justify-center border-r border-[#c0c0c0] bg-[#f0f0f0]">18</div>
              <div class="flex w-[191px] items-center border-r border-[#c0c0c0] pl-[3px] text-[#8a8a8a]"><i class="flex h-[12px] w-[12px] items-center justify-center border border-[#aaa] text-[12px] not-italic leading-none text-[#111]">+</i><span class="ml-[5px]">锚固搭接</span></div>
              <div class="flex-1"></div>
            </div>
            <div class="flex h-[19px] border-b border-[#c8c8c8]">
              <div class="flex w-[21px] items-center justify-center border-r border-[#c0c0c0] bg-[#f0f0f0]">33</div>
              <div class="flex w-[191px] items-center border-r border-[#c0c0c0] pl-[3px] text-[#8a8a8a]"><i class="flex h-[12px] w-[12px] items-center justify-center border border-[#aaa] text-[12px] not-italic leading-none text-[#111]">+</i><span class="ml-[5px]">显示样式</span></div>
              <div class="flex-1"></div>
            </div>
          </div>
        </div>
      </div>
    </section>

    <!-- section editor dialog -->
    <section class="flex h-[619px] w-[715px] flex-col border-b-2 border-r-2 border-[#1d6e80] bg-[linear-gradient(#93adca_0,#bcd2ea_30px,#bcd2ea)] pl-[7px] pr-[6px]">
      <div class="flex h-[29px] items-end pb-[4px]"><span>截面编辑</span></div>
      <div class="flex h-[554px] flex-col bg-[#f0f0f0]">
        <div class="flex h-[20px] items-end border-b border-[#d8d8d8] pl-[2px]">
          <div class="flex h-[17px] w-[40px] items-center justify-center border border-b-0 border-[#c8c8c8]">截面</div>
          <div class="-mb-[1px] flex h-[21px] w-[45px] items-center justify-center bg-white">配筋</div>
        </div>
        <div class="ml-[5px] mt-[4px] flex h-[25px] w-[520px] items-center whitespace-nowrap bg-[#f8f8f8] pl-[7px]">
          <span>纵筋</span><i class="ml-[8px] mr-[7px] h-5 border-l border-[#c8c8c8]"></i><span>直线</span>
          <svg class="ml-[7px] h-1 w-[6px]" viewBox="0 0 7 4"><use href="#dd"/></svg>
          <div class="ml-[4px] flex h-[24px] w-[74px] items-center bg-white pl-[3px] pr-[1px]"><span class="font-['Liberation_Sans',sans-serif] text-[12.500px]">C8@200</span><svg class="ml-auto h-1 w-[6px]" viewBox="0 0 7 4"><use href="#dd"/></svg></div>
          <i class="ml-[7px] h-5 border-l border-[#c8c8c8]"></i>
          <div class="ml-[2px] flex h-[24px] w-[51px] items-center border border-[#2b8cd8] bg-[#dcebf7] pl-[5px]"><svg class="h-[14px] w-[12px]" viewBox="0 0 12 14"><path d="M1 1v11l3-2 2 4 2-1-2-4h4z" fill="#fff" stroke="#555"/></svg><span class="ml-[5px]">选择</span></div>
          <span class="ml-[5px]">手动设置参考线</span><svg class="ml-[7px] h-1 w-[6px]" viewBox="0 0 7 4"><use href="#dd"/></svg>
          <i class="ml-[8px] h-5 border-l border-[#c8c8c8]"></i>
          <svg class="ml-[4px] h-[14px] w-[16px]" viewBox="0 0 16 14"><path d="M4 1h11l-3 12H1z" fill="#eef4fc" stroke="#1f6fd0"/><path d="M4 7h6" stroke="#1f6fd0"/></svg>
          <span class="ml-[4px]">设置标高</span>
          <svg class="ml-[7px] h-4 w-[16px]" viewBox="0 0 16 16"><path d="M1 1h14v14H1z" fill="#fff" stroke="#123f70"/><path d="M4 10h2v5H4z" fill="#d02020"/><path d="M8 7h2v8H8zM11 4h2v11h-2z" fill="#2a5db0"/></svg>
          <span class="ml-[4px]">显示标注</span>
          <span class="ml-[9px] text-[#8d8d8d]">删除</span>
        </div>
        <div class="ml-[6px] mt-[4px] flex h-[26px] w-[162px] items-center whitespace-nowrap bg-[#f8f8f8] pl-[6px]">
          <span>横筋</span><i class="ml-[7px] h-5 border-l border-[#c8c8c8]"></i><span class="ml-[3px] w-[52px]">钢筋类型:</span>
          <span class="flex h-[24px] w-[34px] items-center justify-center border border-[#2b8cd8] bg-[#dcebf7]">水平</span>
          <span class="ml-[5px]">垂直</span>
        </div>
        <!-- canvas -->
        <div class="ml-[6px] mt-[1px] h-[446px] w-[691px] border-2 border-[#ff0000] bg-[#12161f]">
          <svg class="block h-[442px] w-[687px]" viewBox="643 195 687 442" font-family="Liberation Mono, monospace">
            <g fill="none" stroke="#3c414b" stroke-width="1" stroke-dasharray="10 3">
              <path d="M793 213V570M786 213H851M786 237H850M786 570H851M930 213V640M898 237V630M851 570V630M851 627H930"/>
            </g>
            <path d="M787 208l11 11M787 232l11 11M787 565l11 11M846 622l10 10M893 622l10 10M925 622l10 10" stroke="#3c414b"/>
            <g fill="#30343d" font-size="14"><text x="803" y="231">60</text><text x="796" y="409">840</text><text x="865" y="616">120</text><text x="902" y="616">80</text></g>
            <g fill="none" stroke="#6dbb58" stroke-width="1">
              <path d="M851 197H930M851 192V202M930 192V202M846 202l10-10M925 202l10-10"/>
              <path d="M835 213V570M829 213H841M829 570H841M830 208l10 10M830 565l10 10"/>
              <path d="M946 213V237M940 213H952M940 237H952M941 208l10 10M941 232l10 10"/>
              <path d="M914 237V570M908 237H920M908 570H920M909 232l10 10M909 565l10 10"/>
              <path d="M898 252H930M898 247V257M930 247V257M893 257l10-10M925 257l10-10"/>
              <path d="M851 585H898M851 579V591M898 579V591M846 590l10-10M893 590l10-10"/>
            </g>
            <path d="M852 220H930M852 227H930M852 560H898M862 212V220M887 212V220M922 227V238" fill="none" stroke="#a8cdf0" stroke-dasharray="4 3"/>
            <path d="M851 570V213H930V237H898V570Z" fill="none" stroke="#eee" stroke-width="2"/>
            <path d="M869 571V637M893.500 571V613H964V611M866 221H887M866 219v4M887 219v4" fill="none" stroke="#eee" stroke-width="1"/>
            <path d="M862 637V226Q862 220 868 220H918Q922 220 922 226" fill="none" stroke="#c9161c" stroke-width="4"/>
            <path d="M867 227H887V616Q887 619 890 619H964" fill="none" stroke="#c9161c" stroke-width="4"/>
            <g fill="#12161f" stroke="#f2e21a" stroke-width="1.200">
              <circle cx="865" cy="230" r="2"/><circle cx="884" cy="230" r="2"/><circle cx="919" cy="223" r="2"/>
              <circle cx="865" cy="296" r="2"/><circle cx="884" cy="296" r="2"/>
              <circle cx="865" cy="361" r="2"/><circle cx="884" cy="361" r="2"/>
              <circle cx="865" cy="427" r="2"/><circle cx="884" cy="427" r="2"/>
              <circle cx="865" cy="493" r="2"/><circle cx="884" cy="493" r="2"/>
              <circle cx="865" cy="560" r="2"/><circle cx="884" cy="559" r="2"/>
            </g>
            <g fill="#d8e4f2" font-size="10"><text x="818" y="393">900</text><text x="914" y="407">840</text><text x="948" y="229">60</text><text x="908" y="264">80</text><text x="867" y="597">120</text></g>
            <text x="872" y="219" font-size="8" fill="#28e028">50</text>
            <text x="921" y="612" font-size="6" font-weight="bold" fill="#28e028">lac</text>
            <text x="870" y="635" font-size="7" font-weight="bold" fill="#28e028">E</text>
          </svg>
        </div>
        <div class="ml-[7px] mt-[2px] flex h-[25px] items-center whitespace-nowrap pb-[1px]">
          <div class="flex h-[24px] w-[50px] items-center border border-[#2b8cd8] bg-[#dcebf7] pl-[1px]"><svg class="h-[16px] w-[18px]" viewBox="0 0 18 16"><path d="M1 1h15M5 1v15" stroke="#e0a0a0" stroke-width="3"/><path d="M9 6v8l2-1 1 2 1-1-1-2h2z" fill="#ddd" stroke="#888" stroke-width=".5"/></svg><span class="ml-[2px]">正交</span></div>
          <div class="flex h-[24px] w-[76px] items-center border border-[#2b8cd8] bg-[#dcebf7] pl-[3px]"><svg class="h-4 w-[15px]" viewBox="0 0 15 16"><path d="M1 1h13M1 5h13" stroke="#b08080"/><path d="M1 9h13v6H1z" fill="#fff" stroke="#222"/></svg><span class="ml-[4px]">动态输入</span></div>
          <div class="ml-[3px] flex h-[24px] w-[104px] items-center bg-[#f8f8f8]">
            <svg class="ml-[4px] h-[18px] w-[18px]" viewBox="0 0 18 18"><path d="M1 14h16" stroke="#6f9ad0" stroke-width="2"/><path d="M11 1v16" stroke="#1f4fa0"/><rect x="9.500" y="12.500" width="3" height="3" fill="#1f4fa0"/></svg>
            <span class="ml-[2px]">垂点</span>
            <svg class="ml-[8px] h-[14px] w-[16px]" viewBox="0 0 16 14"><path d="M0 7h16" stroke="#6f9ad0" stroke-width="2"/><rect x="5.500" y="4.500" width="5" height="5" fill="#1f4fa0"/></svg>
            <span class="ml-[3px]">中点</span>
          </div>
        </div>
      </div>
      <div class="mt-[5px] flex h-[22px] items-stretch">
        <div class="flex w-[98px] items-center border border-[#e0e0e0] bg-[#f2f2f2] pl-[4px] font-['Liberation_Sans',sans-serif] text-[12px]">(X: 924 Y: 488)</div>
        <div class="ml-[3px] flex flex-1 items-center border border-[#e0e0e0] bg-[#f2f2f2] pl-[1px]">选择钢筋进行编辑，选择标注进行修改或移动;
          <svg class="ml-auto mt-[8px] h-[10px] w-[10px]" viewBox="0 0 10 10"><path d="M8 1h1v1H8zM5 4h1v1H5zM8 4h1v1H8zM2 7h1v1H2zM5 7h1v1H5zM8 7h1v1H8z" fill="#aaa"/></svg>
        </div>
      </div>
    </section>

    <!-- scrollbar strip at the right -->
    <div class="flex h-[619px] w-[23px] flex-col items-center justify-end bg-[#f8f8f8] pb-[9px] pr-[9px]">
      <svg class="h-2 w-[10px]" viewBox="0 0 10 8"><use href="#sdn"/></svg>
    </div>
  </main>

  <!-- status bar -->
  <div class="flex h-[21px] gap-[2px] whitespace-nowrap bg-[#f0f0f0] leading-[20px]">
    <div class="w-[148px] border border-[#d8d8d8] bg-[#f8f8f8]"></div>
    <div class="w-[77px] border border-[#d8d8d8] bg-[#f8f8f8] pl-[1px]">层高<b>:2.8m</b></div>
    <div class="w-[97px] border border-[#d8d8d8] bg-[#f8f8f8] pl-[1px]">底标高<b>:17.55m</b></div>
    <div class="w-[48px] border border-[#d8d8d8] bg-[#f8f8f8] pl-[1px]"><b>0</b></div>
    <div class="w-[913px] border border-[#d8d8d8] bg-[#f8f8f8] pl-[1px]">名称在当前层当前构件类型下不允许重名</div>
    <div class="flex-1 border border-[#d8d8d8] bg-[#f8f8f8] pl-[2px]"><b>62 FPS</b></div>
  </div>

  <!-- taskbar -->
  <footer class="flex h-[40px] items-center whitespace-nowrap bg-[#0a1014] text-white [&>svg]:shrink-0">
    <div class="flex h-full w-[48px] items-center justify-center bg-black">
      <svg class="h-[16px] w-[16px]" viewBox="0 0 16 16"><path d="M0 2.300l6.500-.9v6.200H0zM7.400 1.300L16 0v7.600H7.400zM0 8.500h6.500v6.200L0 13.800zM7.400 8.500H16V16l-8.600-1.200z" fill="#fff"/></svg>
    </div>
    <div class="flex h-full w-[343px] items-center bg-[#333333] pl-[9px]">
      <i class="h-[21px] w-[21px] rounded-full border-[3px] border-[#e8e8e8]"></i>
      <span class="ml-[5px] text-[13px] text-[#9a9a9a]">在这里输入你要搜索的内容</span>
      <svg class="ml-auto mr-[13px] h-[18px] w-[12px]" viewBox="0 0 12 18"><rect x="3.500" y="1" width="5" height="10" rx="2.500" fill="none" stroke="#aaa"/><path d="M1 8c0 6 10 6 10 0M6 13v4M3 17h6" fill="none" stroke="#aaa"/></svg>
    </div>
    <svg class="ml-[14px] h-[16px] w-[20px]" viewBox="0 0 20 16"><path d="M5 1h10v14H5z" fill="none" stroke="#eee"/><path d="M1 3h2v10H1M19 3h-2v10h2" fill="none" stroke="#eee"/></svg>
    <svg class="ml-[29px] h-[26px] w-[24px]" viewBox="0 0 24 26"><path d="M12 13C6 14 1 12 1 7s6-7 9-4c3 2 2 7 2 10zM12 13c6-1 11 1 11 6s-6 7-9 4c-3-2-2-7-2-10zM12 13c-1-6 1-10 6-10s7 6 4 8c-3 2-7 2-10 2zM12 13c1 6-1 10-6 10S-1 17 2 15c3-2 7-2 10-2z" fill="#e4e4e4"/></svg>
    <svg class="ml-[28px] h-[28px] w-[24px]" viewBox="0 0 24 28"><path d="M20 16H7c0 5 8 6 12 3v4c-6 3-15 1-15-8S12 3 18 6c3 2 3 6 2 10zM7 12h9c0-5-8-5-9 0z" fill="#e8e8e8"/><path d="M2 24C-1 20 9 6 22 2c-4 4-15 13-20 22z" fill="#bbb"/></svg>
    <span class="relative ml-[26px] flex h-[26px] w-[28px] items-center"><svg class="h-[20px] w-[20px]" viewBox="0 0 20 20"><path d="M10 2a8 8 0 1 0 8 8 6 6 0 1 0-6 6 4 4 0 1 0-4-4" fill="none" stroke="#ccc" stroke-width="1.500"/></svg><svg class="absolute right-[-2px] top-0 h-[16px] w-[14px]" viewBox="0 0 14 16"><path d="M7 1c3 0 4 3 4 6s1 3 2 5H1c1-2 2-2 2-5s1-6 4-6z" fill="#f5a81c"/><path d="M5 13h4l-2 3z" fill="#f5a81c"/></svg></span>
    <i class="ml-[17px] h-[22px] w-[3px] border-x border-[#444]"></i>
    <svg class="ml-[22px] h-[26px] w-[24px]" viewBox="0 0 24 26"><path d="M22 15H7c0 6 9 7 14 4v5c-8 4-19 1-19-9S13 0 20 4c4 3 4 7 2 11zM7 10h10c0-6-9-5-10 0z" fill="#0f76e0"/></svg>
    <svg class="ml-[21px] h-[26px] w-[24px]" viewBox="0 0 24 26"><path d="M20 16H8c0 5 7 6 11 3v3c-5 3-14 2-14-7S13 4 18 7c3 2 3 6 2 9zM8 12h8c0-4-7-4-8 0z" fill="#2a9ae8"/><path d="M2 24C-1 20 9 5 22 2" fill="none" stroke="#f0c020" stroke-width="2"/></svg>
    <svg class="ml-[19px] h-[24px] w-[24px]" viewBox="0 0 24 24"><path d="M1 3h9l2 3h11v17H1z" fill="#f4d77a"/><path d="M1 3h6v20H1z" fill="#e9be4e"/><path d="M7 15h10v8h-3v-4h-4v4H7z" fill="#1d8fe0"/></svg>
    <svg class="ml-[19px] h-[28px] w-[24px]" viewBox="0 0 24 28"><path d="M13 2L4 8c-4 6-2 16 6 18 6 1 11-4 10-10h-7l-2 4h4c-1 2-6 2-7-2-1-5 2-8 5-9h6l2-5z" fill="#0f83e8"/></svg>
    <svg class="ml-[19px] h-[26px] w-[24px]" viewBox="0 0 24 26"><circle cx="12" cy="13" r="10" fill="#7ccb3c" stroke="#bbb" stroke-width="1.500"/><path d="M5 12h14M7 17h10M8 8c3-4 8-4 10 1" fill="none" stroke="#fff" stroke-width="2"/><path d="M18 3c2-1 3-1 5 0" fill="none" stroke="#333" stroke-width="1.500"/></svg>
    <svg class="ml-[19px] h-[26px] w-[26px]" viewBox="0 0 26 26"><rect x="1" y="1" width="24" height="24" rx="2" fill="#f09418"/><path d="M5 5h14v15H5z" fill="#fff3b8" stroke="#b86a10"/><path d="M7 9h10M7 12h10M7 15h6" stroke="#b86a10"/><path d="M13 17l8-10 2 2-8 10z" fill="#e8c030"/></svg>
    <div class="ml-[9px] flex h-full w-[42px] items-center justify-center bg-[#3a4045]">
      <svg class="h-[26px] w-[26px]" viewBox="0 0 26 26"><rect x="1" y="1" width="24" height="24" rx="3" fill="#1494ee"/><path d="M13 4v18M5 13h3c4 0 5-3 5-3M21 13h-3c-4 0-5 3-5 3" fill="none" stroke="#fff" stroke-width="2.500"/></svg>
    </div>
    <i class="ml-[16px] h-[20px] w-[3px] border-x border-[#444]"></i>
    <span class="ml-[11px] text-[#ccc]">链接</span>
    <div class="ml-[18px] flex w-[48px] flex-col items-center text-[12px] leading-[18px] text-[#ddd]"><span>14%</span><span>CPU使用</span></div>
    <svg class="ml-[19px] h-[8px] w-[12px]" viewBox="0 0 12 8"><path d="M1 7l5-6 5 6" fill="none" stroke="#eee"/></svg>
    <svg class="ml-[11px] h-[14px] w-[16px]" viewBox="0 0 16 14"><rect x="3" y="4" width="12" height="8" fill="none" stroke="#eee"/><rect x="4" y="5" width="6" height="6" fill="#eee"/><path d="M2 1v4M5 1v3" stroke="#eee"/></svg>
    <svg class="ml-[9px] h-[14px] w-[16px]" viewBox="0 0 16 14"><path d="M1 13A11 11 0 0 1 13 1M4 13A8 8 0 0 1 13 4M7 13a5 5 0 0 1 6-6" fill="none" stroke="#ddd" stroke-dasharray="2 1"/><circle cx="12" cy="12" r="1.500" fill="#eee"/></svg>
    <svg class="ml-[5px] h-[15px] w-[16px]" viewBox="0 0 16 15"><path d="M1 5h3l4-4v13l-4-4H1z" fill="none" stroke="#eee"/><path d="M11 4c2 2 2 5 0 7M13 2c3 3 3 8 0 11" fill="none" stroke="#ccc"/></svg>
    <svg class="ml-[10px] h-[16px] w-[23px]" viewBox="0 0 23 16"><rect x=".5" y=".5" width="22" height="15" rx="1" fill="none" stroke="#eee"/><path d="M3 4h17M3 7h17M3 10h17" stroke="#eee" stroke-dasharray="1.500 1"/><path d="M6 13h11" stroke="#eee"/></svg>
    <span class="ml-[10px] text-[13px] text-[#eee]">中</span>
    <svg class="ml-[14px] h-[20px] w-[17px]" viewBox="0 0 17 20"><path d="M2 2l14-1-1 17-14 1z" fill="#ef5a24"/><path d="M12 6C9 4 5 5 5 8c0 3 7 2 7 6 0 2-4 3-7 1" fill="none" stroke="#fff" stroke-width="2"/></svg>
    <div class="ml-[14px] flex w-[62px] flex-col items-center text-[12px] leading-[18px] text-[#ddd]"><span class="pl-[3px]">22:13</span><span>2018/5/10</span></div>
    <div class="ml-[1px] flex h-full w-[58px] items-center justify-center bg-black pr-[10px]"><svg class="h-[19px] w-[17px]" viewBox="0 0 17 19"><path d="M1 1h15v13H10l-2 3-2-3H1z" fill="none" stroke="#eee"/></svg></div>
  </footer>

  <!-- running-app underlines on the taskbar -->
  <i class="pointer-events-none absolute bottom-0 left-[709px] h-[2px] w-[35px] bg-[#7ab8ea]"></i>
  <i class="pointer-events-none absolute bottom-0 left-[753px] h-[2px] w-[35px] bg-[#7ab8ea]"></i>
  <i class="pointer-events-none absolute bottom-0 left-[796px] h-[2px] w-[35px] bg-[#7ab8ea]"></i>
  <i class="pointer-events-none absolute bottom-0 left-[839px] h-[2px] w-[35px] bg-[#7ab8ea]"></i>
  <i class="pointer-events-none absolute bottom-0 left-[878px] h-[2px] w-[42px] bg-[#7ab8ea]"></i>

  <!-- floating network widget -->
  <div class="absolute left-[790px] top-[22px] h-[28px] w-[111px] rounded-r-[20px] rounded-bl-[14px] bg-[#f0f0f0] shadow-[0_2px_4px_rgba(0,0,0,.4)]">
    <svg class="absolute left-[38px] top-[11px] h-[10px] w-[8px]" viewBox="0 0 8 10"><path d="M4 0v7M1 5l3 4 3-4" fill="none" stroke="#1aa050" stroke-width="2"/></svg>
    <span class="absolute left-[52px] top-[8px] font-['Liberation_Sans',sans-serif] text-[10px] text-[#222]">0.04K/s</span>
    <span class="absolute left-[90px] top-[2px] flex h-4 w-4 items-center justify-center rounded-full bg-[#3b78d8] text-[14px] font-bold text-white">+</span>
    <i class="absolute left-[101px] top-[3px] h-[6px] w-[6px] rounded-full bg-[#e03030]"></i>
  </div>
  <div class="absolute left-[778px] top-[6px] flex h-[46px] w-[46px] items-start justify-center rounded-full border-2 border-[#ddd] bg-[#4cc85e] pt-[16px] font-['Liberation_Sans',sans-serif] text-[14px] leading-3 text-white">68%</div>

  <!-- IME bar -->
  <div class="absolute left-[720px] top-[4px] flex h-[23px] w-[188px] items-center border border-[#c6d8ea] bg-[#f6faff] pl-[13px]">
    <span class="text-[14px] font-bold text-[#1f6fc8]">英</span>
    <span class="ml-[7px] text-[13px] font-bold leading-none text-[#1f6fc8]">•,</span>
    <svg class="ml-[9px] h-[18px] w-[18px]" viewBox="0 0 18 18"><circle cx="9" cy="9" r="8" fill="none" stroke="#1f6fc8" stroke-width="1.500"/><circle cx="6" cy="7" r="1" fill="#1f6fc8"/><circle cx="12" cy="7" r="1" fill="#1f6fc8"/><path d="M5 11c2 3 6 3 8 0" fill="none" stroke="#1f6fc8" stroke-width="1.300"/></svg>
    <svg class="ml-[6px] h-[18px] w-[14px]" viewBox="0 0 14 18"><rect x="4" y="0" width="6" height="11" rx="3" fill="#1f6fc8"/><path d="M1 8c0 6 12 6 12 0M7 13v4M3 17h8" fill="none" stroke="#1f6fc8" stroke-width="1.300"/></svg>
    <svg class="ml-[7px] h-[15px] w-[17px]" viewBox="0 0 17 15"><rect width="17" height="15" rx="2" fill="#1f6fc8"/><path d="M3 4h11M3 7h11" stroke="#fff" stroke-dasharray="1.500 1"/><path d="M5 11h7" stroke="#fff"/></svg>
    <svg class="ml-[7px] h-[18px] w-[18px]" viewBox="0 0 18 18"><circle cx="6" cy="5" r="3.500" fill="#a9b8c8"/><path d="M0 17c0-5 2-7 6-7s4 2 4 7z" fill="#a9b8c8"/><rect x="8" y="9" width="9" height="7" fill="#fff" stroke="#a9b8c8"/></svg>
    <svg class="ml-[4px] h-[15px] w-[15px]" viewBox="0 0 15 15"><path d="M4 1l3 2 3-2 5 3-2 4-1-1v8H3V7L2 8 0 4z" fill="#1f6fc8"/></svg>
    <svg class="ml-[6px] h-[15px] w-[15px]" viewBox="0 0 15 15"><path d="M14 3l-3 3-2-2 3-3c-3-1-6 1-5 5L1 12l2 2 6-6c4 1 6-2 5-5z" fill="#1f6fc8"/></svg>
  </div>
  <svg class="absolute left-[702px] top-[2px] h-[27px] w-[27px]" viewBox="0 0 28 28"><rect x="2" y="2" width="24" height="24" rx="4" transform="rotate(-5 14 14)" fill="#ee5a22"/><path d="M20 8c-3-2-12-2-12 2 0 5 12 3 12 8 0 4-9 4-12 2" fill="none" stroke="#fff" stroke-width="3.500"/></svg>
</div>
</body>
</html>
